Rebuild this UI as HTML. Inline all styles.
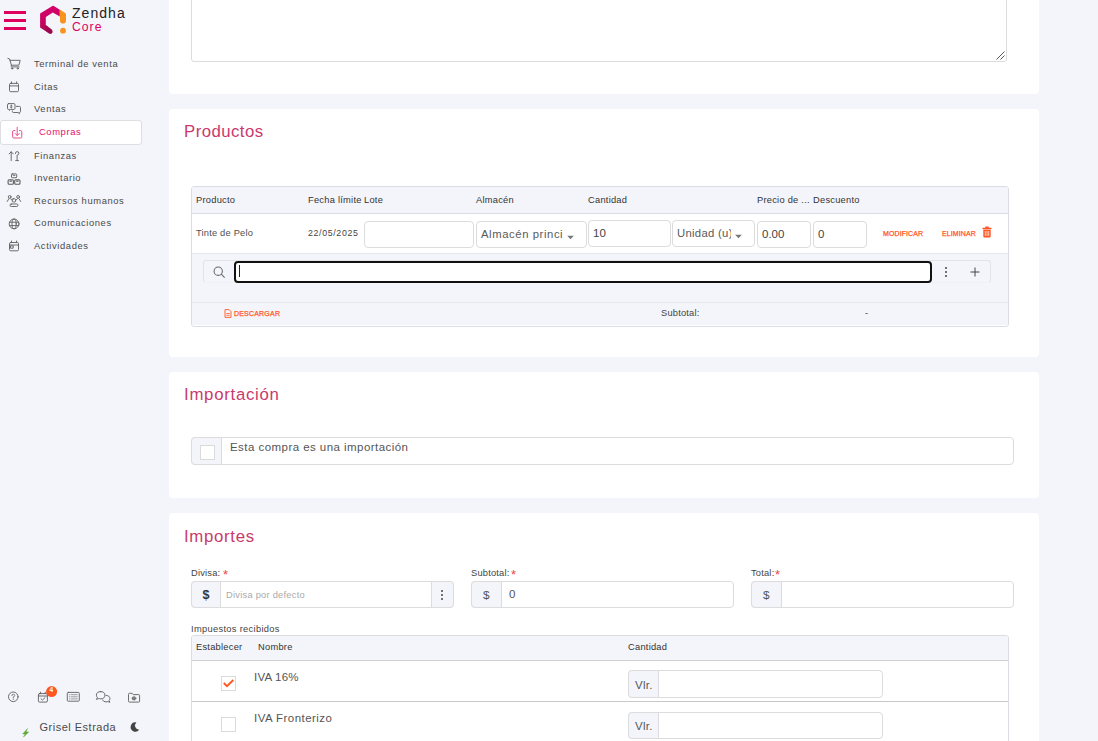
<!DOCTYPE html>
<html lang="es">
<head>
<meta charset="utf-8">
<title>Zendha Core - Compras</title>
<style>
*{box-sizing:border-box;margin:0;padding:0}
html,body{width:1098px;height:741px;overflow:hidden}
body{background:#f4f5fa;font-family:"Liberation Sans",sans-serif;color:#444;position:relative}
.abs{position:absolute}
.t{position:absolute;white-space:nowrap;line-height:1;color:#444}
.card{position:absolute;left:169px;width:870px;background:#fff;border-radius:4px}
.title{position:absolute;left:184px;font-size:16.8px;color:#c93a6c;line-height:1;white-space:nowrap;letter-spacing:0.35px}
.nav{position:absolute;left:34px;font-size:9.4px;color:#4a4a4a;line-height:1;white-space:nowrap;letter-spacing:0.6px}
.ico{position:absolute}
.ico svg{display:block}
.inp{position:absolute;background:#fff;border:1px solid #dcdcdc;border-radius:4px}
.th{position:absolute;font-size:9.3px;color:#333;line-height:1;white-space:nowrap;letter-spacing:0.25px}
.lbl{position:absolute;font-size:9.3px;color:#444;line-height:1;white-space:nowrap;letter-spacing:0.2px}
.or{color:#ff5722;-webkit-text-stroke:0.25px #ff5722}
.addon{position:absolute;background:#f4f5fa;border:1px solid #dcdcdc}
</style>
</head>
<body>

<!-- ===== SIDEBAR ===== -->
<div id="sidebar">
  <!-- active item -->
  <div class="abs" style="left:0;top:120px;width:142px;height:24.5px;background:#fff;border:1px solid #dddde2;border-radius:3px"></div>

  <svg class="abs" style="left:0;top:0" width="160" height="741" viewBox="0 0 160 741" fill="none" stroke="#5e5e5e" stroke-width="0.9" stroke-linecap="round" stroke-linejoin="round">
    <defs>
      <linearGradient id="lg" x1="0" y1="0" x2="0" y2="1"><stop offset="0" stop-color="#d6006b"/><stop offset="0.55" stop-color="#c80562"/><stop offset="1" stop-color="#a3094f"/></linearGradient>
    </defs>
    <!-- hamburger -->
    <g stroke="none" fill="#e0005e"><rect x="4" y="11" width="22" height="3"/><rect x="4" y="19" width="22" height="3"/><rect x="4" y="27" width="22" height="3"/></g>
    <!-- logo -->
    <path stroke="none" fill="url(#lg)" d="M52.8 5.800L40.100 13.600V27.600L49.200 33.400Q51.500 34.400 52.400 32.200Q52.800 30.600 51.600 29.600L45.800 25V17L52.800 12.600L59.800 16.600V9.800L53.800 6Q53.300 5.700 52.800 5.800Z"/>
    <path stroke="none" fill="#8f0a48" opacity=".55" d="M45.800 25L51.600 29.600Q52.800 30.600 52.400 32.200Q51.500 34.400 49.200 33.400L46.500 31.700Z"/>
    <path stroke="none" fill="#f7941d" d="M59.800 9.600L65.200 13Q66 13.500 66 14.500V20.800Q66 23.600 63 23.600Q60 23.600 60 20.800Z"/>
    <circle stroke="none" fill="#f7941d" cx="63" cy="30.700" r="2.900"/>

    <!-- cart -->
    <path d="M7.900 58.400L9.600 58.900L11.400 65.200H18.900L20.200 60.300H10M11.400 65.200Q10.300 66.900 11.600 66.900H19"/>
    <circle cx="12.100" cy="68.400" r=".7"/><circle cx="17.800" cy="68.400" r=".7"/>
    <!-- calendar -->
    <rect x="9.500" y="83.400" width="9" height="8.300" rx="1.200"/><path d="M9.500 85.900H18.500M11.500 81.900V83.400M16.600 81.900V83.400"/>
    <!-- ventas -->
    <path d="M8.600 103.600H13.900Q15 103.600 15 104.700V108.300Q15 109.400 13.900 109.400H10.600L9.400 110.500V109.400H8.600Q7.500 109.400 7.500 108.300V104.700Q7.500 103.600 8.600 103.600Z"/>
    <path d="M16.400 106.400H19.400Q20.500 106.400 20.500 107.500V111.400Q20.500 112.500 19.400 112.500V113.700L18 112.500H13.400Q12.300 112.500 12.300 111.400V110.900"/>
    <path stroke-width=".6" d="M12.100 105.700Q11.300 105.200 10.600 105.700Q10.200 106.300 11.300 106.500Q12.400 106.800 12 107.400Q11.300 107.900 10.400 107.400M11.300 104.800V108.200"/>
    <!-- compras -->
    <g stroke="#ea3a80"><path d="M15 130.600H13.800Q12.600 130.600 12.600 131.800V136.800Q12.600 138 13.800 138H20.600Q21.800 138 21.800 136.800V131.800Q21.800 130.600 20.600 130.600H19.400"/><path d="M17.200 127.300V135.400M15.200 133.500L17.200 135.500L19.200 133.500"/></g>
    <!-- finanzas -->
    <path d="M11.200 160.600V151.800M9.100 153.900L11.200 151.800L13.300 153.900"/>
    <path d="M15.400 153.500Q15.400 151.600 17.100 151.600Q18.900 151.600 18.900 153.300Q18.900 154.900 17.100 155.100V160.200M15.700 160.600H18.500"/>
    <!-- inventario -->
    <rect x="11.500" y="173.900" width="5.200" height="3.800" rx=".7"/><path stroke-width="1.100" d="M13.300 175.200H14.900"/>
    <g stroke-width="1.100"><rect x="8.100" y="179.800" width="5.300" height="4.400" rx="1"/><rect x="14.700" y="179.800" width="5.300" height="4.400" rx="1"/><path d="M9.900 181.100H11.600M16.500 181.100H18.200"/></g>
    <!-- recursos humanos -->
    <circle cx="9.700" cy="196.900" r="1.400"/><circle cx="18.100" cy="196.900" r="1.400"/>
    <path d="M7.200 201.500L8.900 198.700M10.500 198.700L12 200.200M20.700 201.500L19 198.700M17.400 198.700L15.900 200.200"/>
    <rect x="12.300" y="198.800" width="3.300" height="3.200" rx=".8"/>
    <rect x="10" y="204" width="8" height="2.500" rx="1.250"/>
    <!-- comunicaciones -->
    <circle cx="14.100" cy="223.900" r="4.900"/><ellipse cx="14.100" cy="223.900" rx="2.100" ry="4.900"/><path d="M9.500 222.200H18.700M9.500 225.600H18.700"/>
    <!-- actividades -->
    <rect x="9.500" y="242.500" width="9" height="8.300" rx="1.200"/><path d="M9.500 245H18.500M11.500 241V242.500M16.600 241V242.500"/><rect x="10.900" y="245.900" width="2.300" height="2.300"/>

    <!-- help -->
    <circle cx="13.300" cy="696.800" r="4.800"/>
    <path stroke-width=".8" d="M11.900 695.600Q11.900 694.200 13.300 694.200Q14.700 694.200 14.700 695.500Q14.700 696.500 13.300 696.900V697.800M13.300 699V699.500"/>
    <!-- calendar check -->
    <rect x="38.400" y="693.600" width="9" height="8.500" rx="1.200"/><path d="M38.400 696H47.400M40.600 692.200V693.600M45.200 692.200V693.600M41 698.800L42.400 700.100L45 697.600"/>
    <circle stroke="none" fill="#ff5722" cx="51.600" cy="691.600" r="5.500"/>
    <!-- list -->
    <rect x="67.300" y="692.400" width="12" height="8.800" rx="1"/>
    <path stroke-width=".6" d="M69.300 694.700H69.900M71.300 694.700H77.300M69.300 696.800H69.900M71.300 696.800H77.300M69.300 698.900H69.900M71.300 698.900H77.300"/>
    <!-- chat -->
    <path d="M100.700 691.600Q104.900 691.600 104.900 695.200Q104.900 698.800 100.700 698.800Q99.700 698.800 98.900 698.500L96.400 699.400L97.400 697.500Q96.400 696.500 96.400 695.200Q96.400 691.600 100.700 691.600Z"/>
    <path d="M105.900 695.300Q109.900 695.600 109.900 698.600Q109.900 699.800 109.100 700.600L109.900 702.300L107.800 701.600Q107 701.900 106 701.900Q103.300 701.900 102.500 699.900"/>
    <!-- folder -->
    <path d="M128.500 694.200Q128.500 693.300 129.400 693.300H132.200L133.300 694.600H138.700Q139.600 694.600 139.600 695.500V701.200Q139.600 702.100 138.700 702.100H129.400Q128.500 702.100 128.500 701.200Z"/>
    <rect x="132.900" y="697.200" width="2.400" height="2.300" stroke-width=".8"/><path stroke-width=".7" d="M131.900 698.300H136.300M134.100 696.300V700.400"/>
    <!-- bolt -->
    <path stroke="#5aa832" stroke-width=".5" fill="#5aa832" d="M27.300 728.900L22.700 733.900H25.200L23.500 737.100L28.700 731.900H26.100Z"/>
    <!-- moon -->
    <path stroke="none" fill="#444" d="M136.400 722.400A4.700 4.700 0 1 0 139.200 729.700A4.200 4.200 0 0 1 136.400 722.400Z"/>
    <text x="49.400" y="691.700" stroke="none" fill="#fff" font-family="Liberation Sans, sans-serif" font-weight="bold" font-size="6.500">4</text>
  </svg>

  <div class="t" style="left:72px;top:5.5px;font-size:14px;color:#222;letter-spacing:1.05px">Zendha</div>
  <div class="t" style="left:72px;top:21.3px;font-size:12.2px;color:#e0005e;letter-spacing:1px">Core</div>

  <div class="nav" style="top:59px">Terminal de venta</div>
  <div class="nav" style="top:81.5px">Citas</div>
  <div class="nav" style="top:104px">Ventas</div>
  <div class="nav" style="top:127px;left:39px;color:#e8106a">Compras</div>
  <div class="nav" style="top:150.500px">Finanzas</div>
  <div class="nav" style="top:173px">Inventario</div>
  <div class="nav" style="top:196px">Recursos humanos</div>
  <div class="nav" style="top:218px">Comunicaciones</div>
  <div class="nav" style="top:241px">Actividades</div>

  <div class="t" style="left:39.5px;top:721.5px;font-size:11px;color:#4a4a4a;letter-spacing:0.5px">Grisel Estrada</div>
</div>

<!-- ===== MAIN ===== -->
<div id="main">
  <!-- card 1 (cut off at top) -->
  <div class="card" style="top:-20px;height:114px"></div>
  <div class="inp" style="left:191px;top:-20px;width:816px;height:82px;border-radius:3px"></div>
  <div class="ico" style="left:995px;top:50px"><svg width="10" height="10" viewBox="0 0 10 10" fill="none" stroke="#555" stroke-width="1"><path d="M1.500 9.500L9.500 1.500M5.500 9.500L9.500 5.500"/></svg></div>

  <!-- card 2: Productos -->
  <div class="card" style="top:109px;height:248px"></div>
  <div class="title" style="top:124.2px;letter-spacing:0.45px">Productos</div>

  <div class="abs" style="left:191px;top:186px;width:818px;height:141px;border:1px solid #dcdde3;border-radius:3px;background:#fff;overflow:hidden">
    <div class="abs" style="left:0;top:0;width:816px;height:27px;background:#f4f5fa;border-bottom:1px solid #dcdde3"></div>
    <div class="abs" style="left:0;top:66px;width:816px;height:72px;background:#f4f5fa"></div>
    <div class="abs" style="left:0;top:66px;width:816px;height:1px;background:#e6e7ec"></div>
    <div class="abs" style="left:0;top:115px;width:816px;height:1px;background:#e6e7ec"></div>
  </div>
  <div class="th" style="left:196px;top:196px">Producto</div>
  <div class="th" style="left:308px;top:196px">Fecha límite</div>
  <div class="th" style="left:364px;top:196px">Lote</div>
  <div class="th" style="left:476px;top:196px">Almacén</div>
  <div class="th" style="left:588px;top:196px">Cantidad</div>
  <div class="th" style="left:757px;top:196px">Precio de ...</div>
  <div class="th" style="left:813px;top:196px">Descuento</div>

  <div class="lbl" style="left:196px;top:229px;color:#505050">Tinte de Pelo</div>
  <div class="lbl" style="left:308px;top:229px;color:#444;font-size:8.8px;letter-spacing:0.65px">22/05/2025</div>
  <div class="inp" style="left:364px;top:221px;width:110px;height:27px"></div>
  <div class="inp" style="left:476px;top:221px;width:110.5px;height:26.5px"></div>
  <div class="t" style="left:481px;top:228.5px;font-size:11.3px;color:#5a5a5a;letter-spacing:0.58px">Almacén princi</div>
  <div class="ico" style="left:567px;top:234.5px"><svg width="7" height="5" viewBox="0 0 7 5"><path d="M.2 .8h6.600L3.500 4.200Z" fill="#777"/></svg></div>
  <div class="inp" style="left:588px;top:220px;width:82.5px;height:27px"></div>
  <div class="t" style="left:593px;top:228px;font-size:11.500px;color:#444">10</div>
  <div class="inp" style="left:672px;top:220px;width:83px;height:27px"></div>
  <div class="t" style="left:677px;top:227.5px;font-size:11.3px;color:#5a5a5a;letter-spacing:0.3px">Unidad (u)</div>
  <div class="abs" style="left:731px;top:222px;width:22px;height:23px;background:#fff"></div>
  <div class="ico" style="left:735px;top:233.5px"><svg width="7" height="5" viewBox="0 0 7 5"><path d="M.2 .8h6.600L3.500 4.200Z" fill="#777"/></svg></div>
  <div class="inp" style="left:757px;top:221px;width:54px;height:27px"></div>
  <div class="t" style="left:762px;top:229px;font-size:11.500px;color:#444">0.00</div>
  <div class="inp" style="left:813px;top:221px;width:54px;height:27px"></div>
  <div class="t" style="left:818px;top:229px;font-size:11.500px;color:#444">0</div>
  <div class="t or" style="left:883px;top:230px;font-size:7px;letter-spacing:0.1px">MODIFICAR</div>
  <div class="t or" style="left:942px;top:230px;font-size:7px;letter-spacing:0.1px">ELIMINAR</div>
  <div class="ico" style="left:982px;top:226px"><svg width="10" height="12" viewBox="0 0 10 12"><path d="M.5 1.800h9v1.400h-9ZM3.300 .5h3.400v1.300h-3.400ZM1.300 3.800h7.400v6.400Q8.700 11.500 7.500 11.500h-5Q1.300 11.500 1.300 10.200Z" fill="#ff5722"/><path d="M3.300 5v5M5 5v5M6.700 5v5" stroke="#fff" stroke-width=".7"/></svg></div>

  <!-- search row -->
  <div class="abs" style="left:203px;top:260px;width:788px;height:23px;border:1px solid #e2e3e9;border-bottom-color:#f0f1f6;border-radius:3px;background:#f4f5fa"></div>
  <div class="ico" style="left:212.5px;top:266px"><svg width="12.5" height="12.5" viewBox="0 0 12 12" fill="none" stroke="#666" stroke-width="1"><circle cx="5" cy="5" r="4"/><path d="M7.900 7.900L11.200 11.200"/></svg></div>
  <div class="abs" style="left:234px;top:261px;width:698px;height:22px;border:2px solid #111;border-radius:4px;background:#fff"></div>
  <div class="abs" style="left:239px;top:265px;width:1px;height:12px;background:#222"></div>
  <div class="abs" style="left:945px;top:267px;width:2px;height:2px;background:#444;border-radius:1px;box-shadow:0 4px 0 #444,0 8px 0 #444"></div>
  <div class="ico" style="left:970px;top:267px"><svg width="10" height="10" viewBox="0 0 10 10" stroke="#444" stroke-width="1"><path d="M5 .5v9M.5 5h9"/></svg></div>

  <!-- footer row -->
  <div class="ico" style="left:224px;top:309px"><svg width="8" height="9" viewBox="0 0 8 9" fill="none" stroke="#ff5722" stroke-width=".9"><path d="M1 .6h4L7 2.600V8.400H1Z"/><path d="M2.300 4.500h3.400M2.300 6.300h3.400" stroke-width=".8"/></svg></div>
  <div class="t or" style="left:234px;top:310px;font-size:7px;letter-spacing:0.200px">DESCARGAR</div>
  <div class="lbl" style="left:661px;top:309px">Subtotal:</div>
  <div class="lbl" style="left:865px;top:309px">-</div>

  <!-- card 3: Importación -->
  <div class="card" style="top:372px;height:126px"></div>
  <div class="title" style="top:387.4px;letter-spacing:0.72px">Importación</div>
  <div class="abs" style="left:191px;top:437px;width:823px;height:28px;border:1px solid #dcdcdc;border-radius:4px;background:#fff"></div>
  <div class="abs" style="left:191px;top:437px;width:31px;height:28px;border:1px solid #dcdcdc;border-radius:4px 0 0 4px;background:#f4f5fa"></div>
  <div class="abs" style="left:200px;top:445px;width:15px;height:15px;border:1px solid #dadada;background:#fff"></div>
  <div class="t" style="left:230px;top:442px;font-size:11.5px;color:#555;letter-spacing:0.45px">Esta compra es una importación</div>

  <!-- card 4: Importes -->
  <div class="card" style="top:513px;height:240px"></div>
  <div class="title" style="top:528.5px;letter-spacing:0.68px">Importes</div>
  <div class="lbl" style="left:191px;top:569px">Divisa:</div><div class="t" style="left:223px;top:567.5px;font-size:13px;color:#f0453a">*</div>
  <div class="lbl" style="left:471px;top:569px">Subtotal:</div><div class="t" style="left:511px;top:567.5px;font-size:13px;color:#f0453a">*</div>
  <div class="lbl" style="left:751px;top:569px">Total:</div><div class="t" style="left:775px;top:567.5px;font-size:13px;color:#f0453a">*</div>

  <!-- Divisa group -->
  <div class="abs" style="left:191px;top:581px;width:263px;height:27px;border:1px solid #dcdcdc;border-radius:4px;background:#fff"></div>
  <div class="addon" style="left:191px;top:581px;width:30px;height:27px;border-radius:4px 0 0 4px"></div>
  <div class="t" style="left:202.5px;top:588.5px;font-size:12.5px;font-weight:bold;color:#333">$</div>
  <div class="t" style="left:226px;top:591px;font-size:9.3px;color:#aaa;letter-spacing:0.25px">Divisa por defecto</div>
  <div class="addon" style="left:431px;top:581px;width:23px;height:27px;border-radius:0 4px 4px 0"></div>
  <div class="abs" style="left:441px;top:590px;width:2px;height:2px;background:#444;border-radius:1px;box-shadow:0 4px 0 #444,0 8px 0 #444"></div>

  <!-- Subtotal group -->
  <div class="abs" style="left:471px;top:581px;width:263px;height:27px;border:1px solid #dcdcdc;border-radius:4px;background:#fff"></div>
  <div class="addon" style="left:471px;top:581px;width:31px;height:27px;border-radius:4px 0 0 4px"></div>
  <div class="t" style="left:483px;top:590px;font-size:11.8px;color:#555">$</div>
  <div class="t" style="left:509px;top:589px;font-size:11.5px;color:#555">0</div>

  <!-- Total group -->
  <div class="abs" style="left:751px;top:581px;width:263px;height:27px;border:1px solid #dcdcdc;border-radius:4px;background:#fff"></div>
  <div class="addon" style="left:751px;top:581px;width:31px;height:27px;border-radius:4px 0 0 4px"></div>
  <div class="t" style="left:763px;top:590px;font-size:11.8px;color:#555">$</div>

  <div class="lbl" style="left:191px;top:625px;letter-spacing:0.32px">Impuestos recibidos</div>

  <!-- taxes table -->
  <div class="abs" style="left:191px;top:635px;width:818px;height:120px;border:1px solid #dcdde3;border-radius:3px;background:#fff;overflow:hidden">
    <div class="abs" style="left:0;top:0;width:816px;height:25px;background:#f4f5fa;border-bottom:1px solid #d0d0d0"></div>
    <div class="abs" style="left:0;top:65px;width:816px;height:1px;background:#c8c8c8"></div>
  </div>
  <div class="th" style="left:196px;top:643px">Establecer</div>
  <div class="th" style="left:258px;top:643px">Nombre</div>
  <div class="th" style="left:628px;top:643px">Cantidad</div>

  <!-- row 1 -->
  <div class="abs" style="left:221px;top:676px;width:15px;height:15px;border:1px solid #dadada;background:#fff"></div>
  <div class="ico" style="left:223px;top:679px"><svg width="11" height="9" viewBox="0 0 11 9" fill="none" stroke="#ff5722" stroke-width="1.900"><path d="M.8 4L4 7.100L10.300 1"/></svg></div>
  <div class="t" style="left:254px;top:672px;font-size:11.5px;color:#555;letter-spacing:0.2px">IVA 16%</div>
  <div class="abs" style="left:628px;top:670px;width:255px;height:28px;border:1px solid #dcdcdc;border-radius:4px;background:#fff"></div>
  <div class="addon" style="left:628px;top:670px;width:31px;height:28px;border-radius:4px 0 0 4px"></div>
  <div class="t" style="left:635px;top:680px;font-size:11.5px;color:#555;letter-spacing:0.3px">Vlr.</div>

  <!-- row 2 -->
  <div class="abs" style="left:221px;top:717px;width:15px;height:15px;border:1px solid #dadada;background:#fff"></div>
  <div class="t" style="left:254px;top:713px;font-size:11.5px;color:#555;letter-spacing:0.45px">IVA Fronterizo</div>
  <div class="abs" style="left:628px;top:712px;width:255px;height:27px;border:1px solid #dcdcdc;border-radius:4px;background:#fff"></div>
  <div class="addon" style="left:628px;top:712px;width:31px;height:27px;border-radius:4px 0 0 4px"></div>
  <div class="t" style="left:635px;top:721px;font-size:11.5px;color:#555;letter-spacing:0.3px">Vlr.</div>
</div>

</body>
</html>
